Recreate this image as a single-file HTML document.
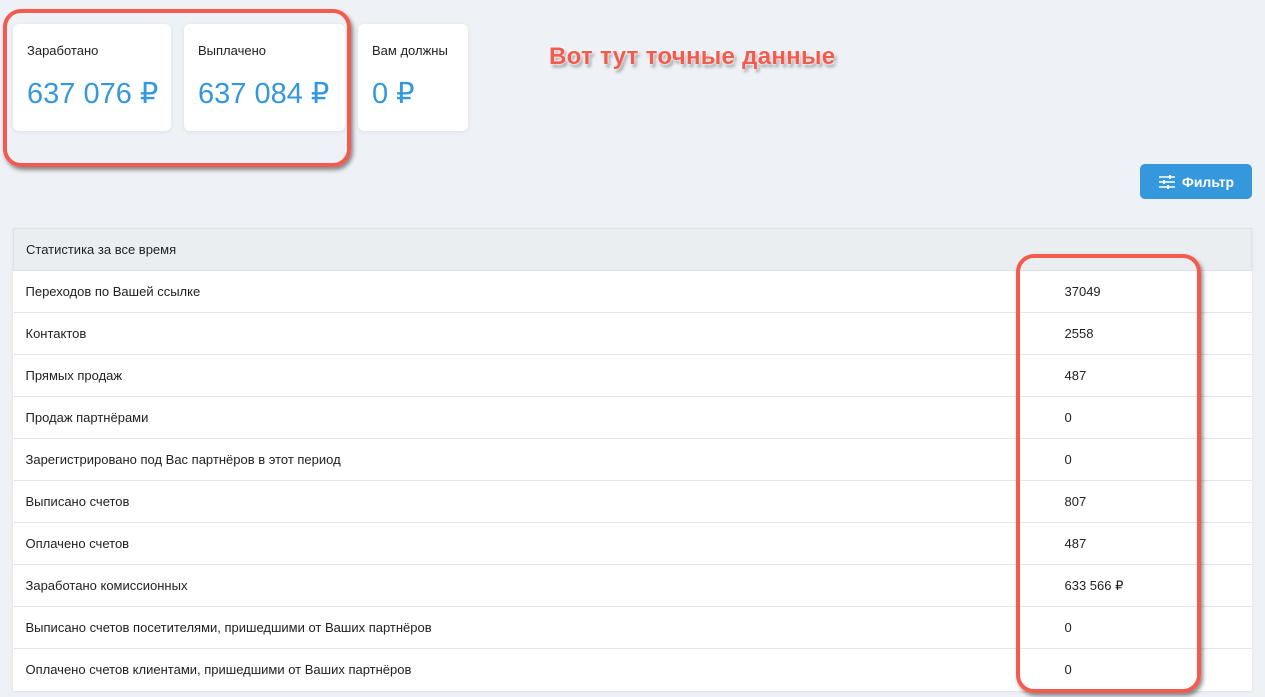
<!DOCTYPE html>
<html><head><meta charset="utf-8"><style>
*{box-sizing:border-box;margin:0;padding:0}
body{width:1265px;height:697px;background:#eef1f6;font-family:"Liberation Sans",sans-serif;position:relative;overflow:hidden;color:#222}
.card{position:absolute;top:24px;height:107px;background:#fff;border-radius:6px;box-shadow:0 1px 4px rgba(0,0,0,.08)}
.card .t{position:absolute;left:14px;top:19px;font-size:13px;color:#222}
.card .v{position:absolute;left:14px;top:52px;font-size:29px;color:#3598dc}
.red{position:absolute;border:4px solid #f45b4f;border-radius:18px;box-shadow:2px 3px 4px rgba(0,0,0,.45)}
.note{position:absolute;left:549px;top:43px;font-size:24px;font-weight:bold;color:#f45b4f;text-shadow:0 0 2px #fff,0 0 3px #fff,2px 3px 3px rgba(0,0,0,.4);letter-spacing:0.3px}
.btn{position:absolute;left:1140px;top:164px;width:112px;height:35px;background:#3598dc;border-radius:5px;color:#fff;font-size:14px;font-weight:bold;display:flex;align-items:center;justify-content:center;gap:6px}
table{position:absolute;left:13px;top:228px;width:1239px;border-collapse:collapse;background:#fff;box-shadow:0 1px 3px rgba(0,0,0,.08);font-size:13px}
th{background:#ebeef0;text-align:left;font-weight:normal;height:42px;padding-left:12px;border:1px solid #dde2e6}
td{height:42px;padding-left:12px;border-top:1px solid #e2e6ea}
td.n{width:187px;padding-left:0}
</style></head><body>
<div class="card" style="left:13px;width:158px"><div class="t">Заработано</div><div class="v">637 076 ₽</div></div>
<div class="card" style="left:184px;width:161px"><div class="t">Выплачено</div><div class="v">637 084 ₽</div></div>
<div class="card" style="left:358px;width:110px"><div class="t">Вам должны</div><div class="v">0 ₽</div></div>
<div class="note">Вот тут точные данные</div>
<div class="btn"><svg width="18" height="16" viewBox="0 0 18 16" fill="none" stroke="#fff" stroke-width="1.6"><path d="M1 3h16M1 8h16M1 13h16"/><path d="M12 1v4M6 6v4M10 11v4" stroke-width="2"/></svg>Фильтр</div>
<table>
<tr><th colspan="2">Статистика за все время</th></tr>
<tr><td>Переходов по Вашей ссылке</td><td class="n">37049</td></tr>
<tr><td>Контактов</td><td class="n">2558</td></tr>
<tr><td>Прямых продаж</td><td class="n">487</td></tr>
<tr><td>Продаж партнёрами</td><td class="n">0</td></tr>
<tr><td>Зарегистрировано под Вас партнёров в этот период</td><td class="n">0</td></tr>
<tr><td>Выписано счетов</td><td class="n">807</td></tr>
<tr><td>Оплачено счетов</td><td class="n">487</td></tr>
<tr><td>Заработано комиссионных</td><td class="n">633 566 ₽</td></tr>
<tr><td>Выписано счетов посетителями, пришедшими от Ваших партнёров</td><td class="n">0</td></tr>
<tr><td>Оплачено счетов клиентами, пришедшими от Ваших партнёров</td><td class="n">0</td></tr>
</table>
<div class="red" style="left:3px;top:9px;width:348px;height:158px"></div>
<div class="red" style="left:1016px;top:254px;width:185px;height:439px"></div>
</body></html>
